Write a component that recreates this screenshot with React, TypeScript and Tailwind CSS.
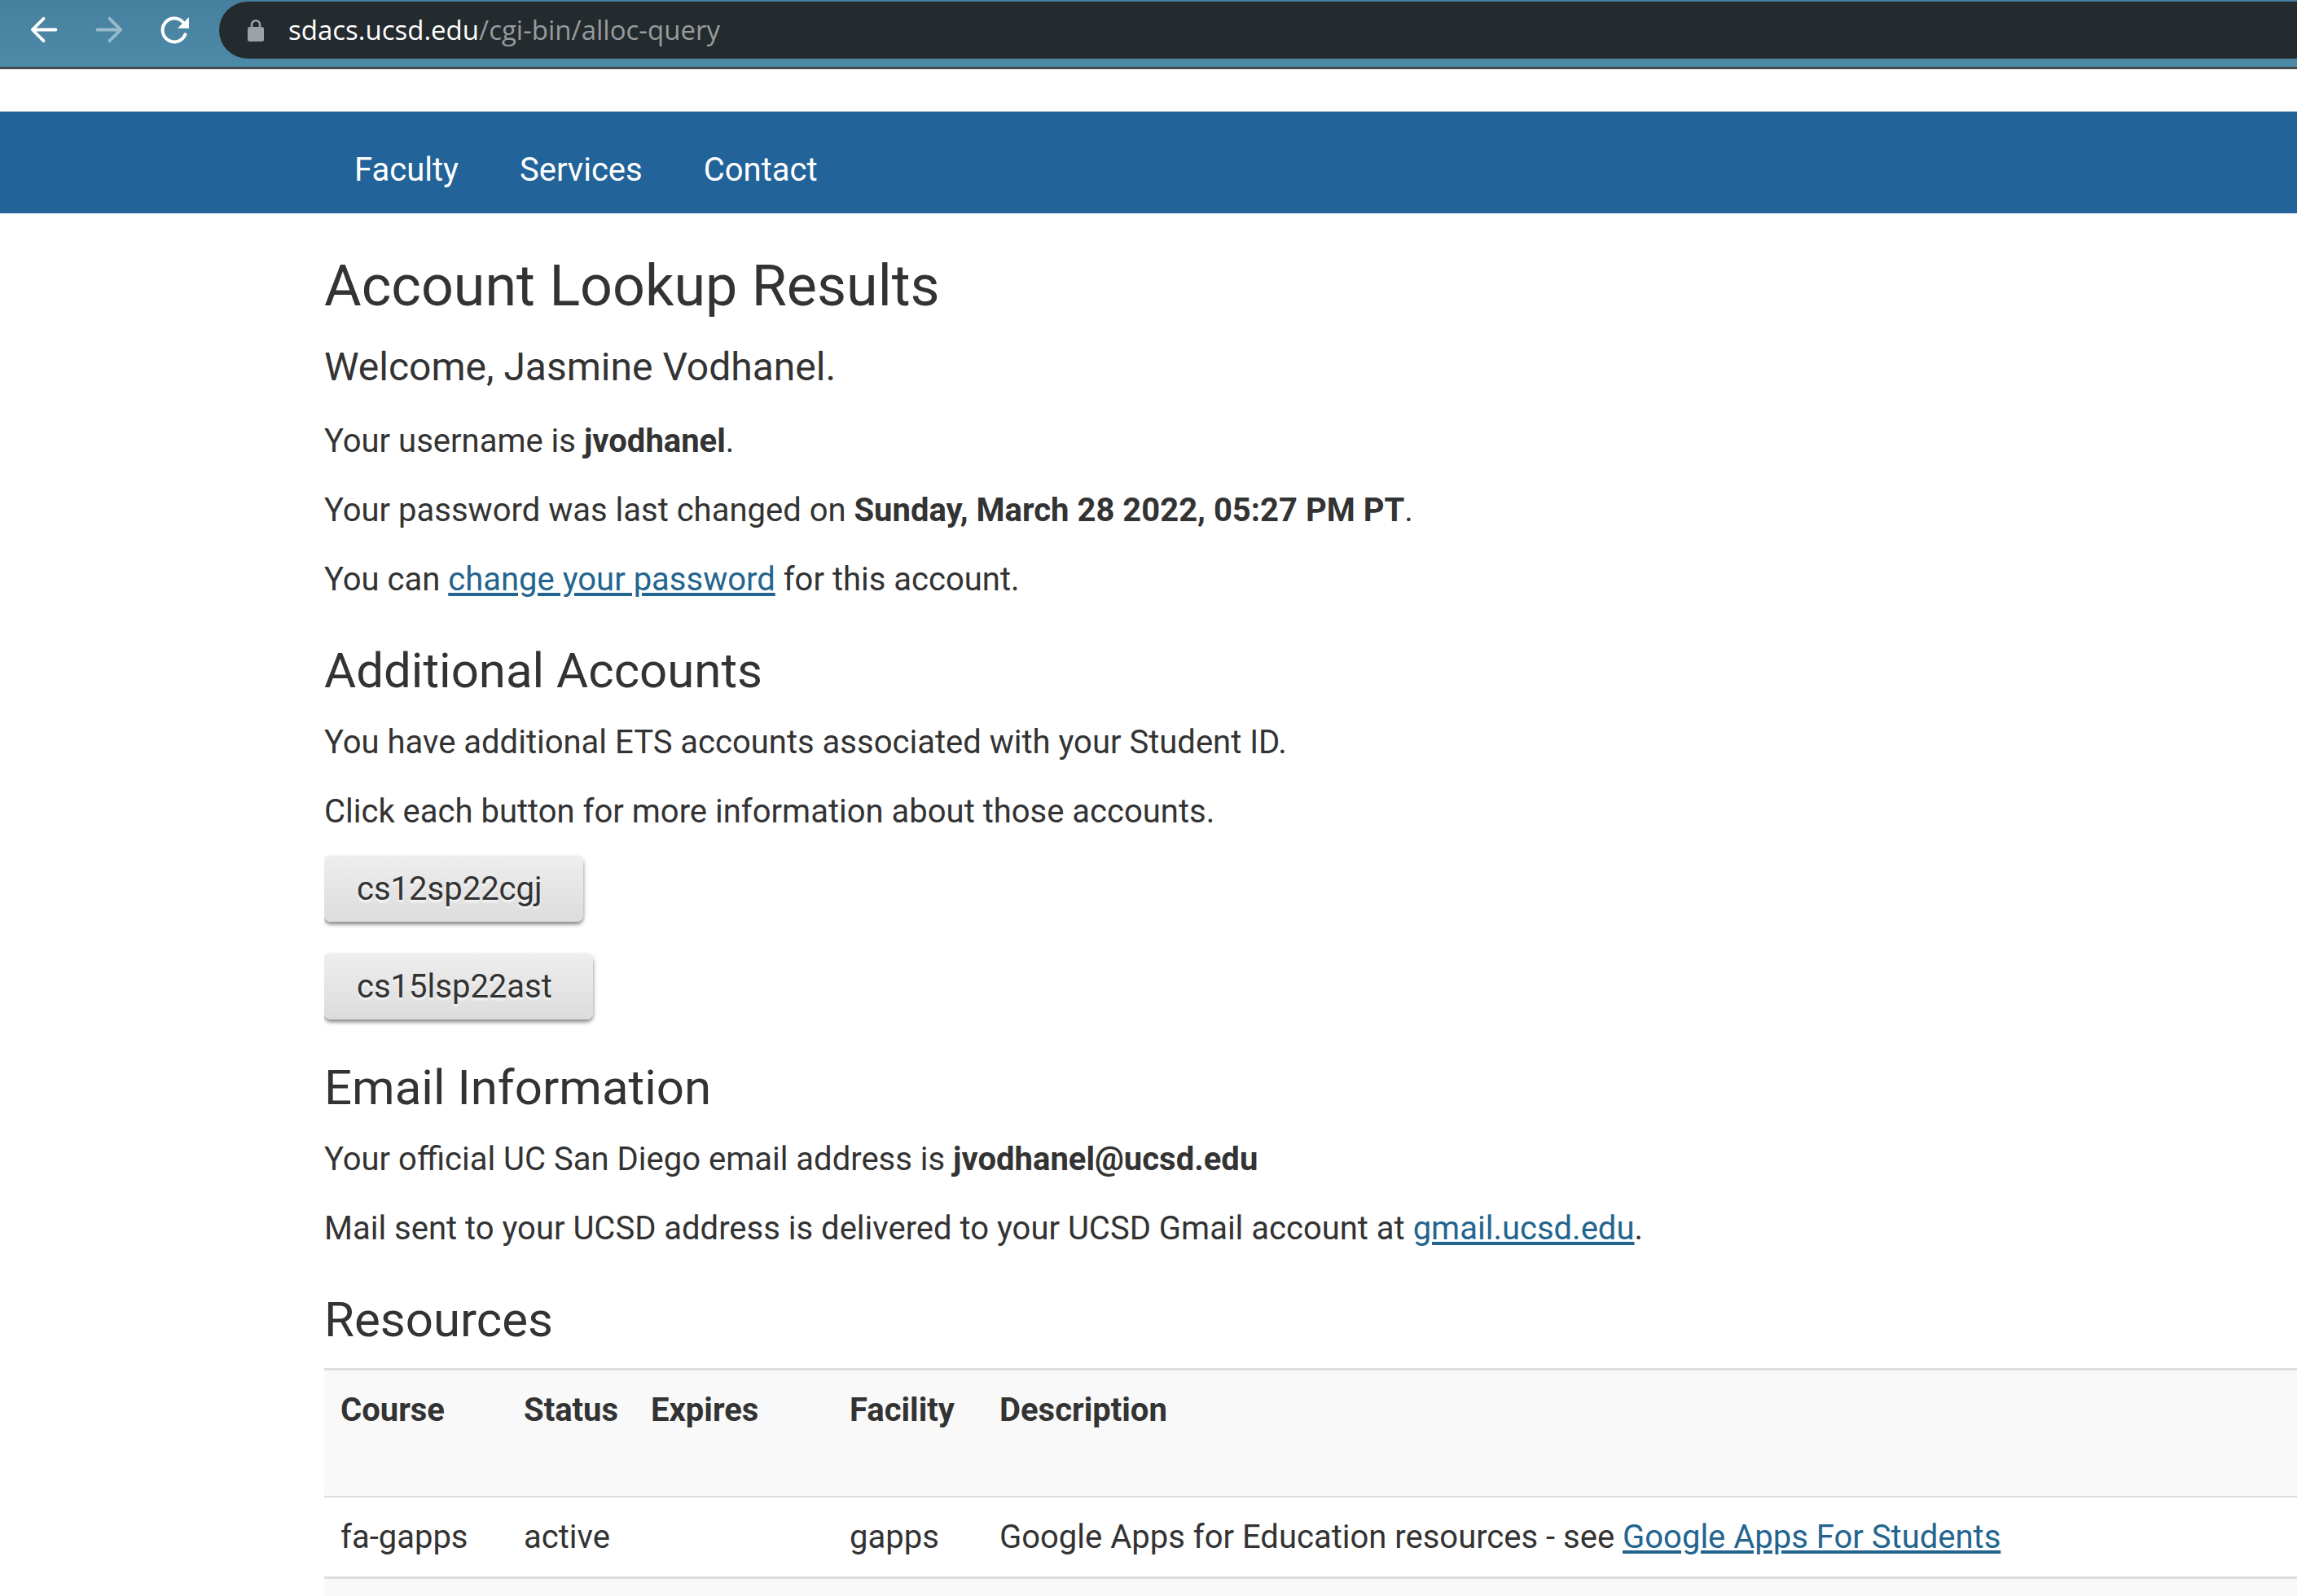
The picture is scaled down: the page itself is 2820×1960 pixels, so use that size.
import type { ReactNode } from "react";

const navLinks = ["Faculty", "Services", "Contact"];
const accounts = ["cs12sp22cgj", "cs15lsp22ast"];

function BackIcon() {
  return (
    <svg width="36" height="36" viewBox="0 0 36 36" fill="none" stroke="currentColor" strokeWidth="3.8" strokeLinecap="round" strokeLinejoin="round" aria-hidden="true">
      <path d="M32.5 17.5H4M17.5 3.8L3.8 17.5L17.5 31.2" />
    </svg>
  );
}

function ForwardIcon() {
  return (
    <svg width="36" height="36" viewBox="0 0 36 36" fill="none" stroke="currentColor" strokeWidth="3.8" strokeLinecap="round" strokeLinejoin="round" aria-hidden="true">
      <path d="M3.5 17.5H32M18.5 3.8L32.2 17.5L18.5 31.2" />
    </svg>
  );
}

function ReloadIcon() {
  return (
    <svg width="36" height="36" viewBox="0 0 36 36" fill="none" aria-hidden="true">
      <path d="M31.4 23.3A14.4 14.4 0 1 1 28.2 7.8" stroke="currentColor" strokeWidth="4" strokeLinecap="round" />
      <path d="M36 2V15.8H22Z" fill="currentColor" />
    </svg>
  );
}

function LockIcon() {
  return (
    <svg width="20" height="28" viewBox="0 0 20 28" fill="none" aria-hidden="true">
      <rect x="0" y="10" width="20" height="18" rx="2.5" fill="#9ea1a8" />
      <path d="M5 11V7.3a5 5 0 0 1 10 0V11" stroke="#9ea1a8" strokeWidth="2.6" />
    </svg>
  );
}

function PageLink({ children }: { children: ReactNode }) {
  return (
    <a href="#" className="text-[#24658f] underline decoration-[4px] underline-offset-[3px]">
      {children}
    </a>
  );
}

function SectionTitle({ children }: { children: ReactNode }) {
  return <h2 className="mt-[51px] mb-[26px] text-[60px] leading-[66px]">{children}</h2>;
}

export default function App() {
  return (
    <div className="h-screen overflow-hidden bg-white font-[Roboto,sans-serif] text-[40px] leading-[57px] text-[#333]">
      <header className="flex h-[85px] items-start border-b-[3px] border-[#474b50] bg-linear-to-b from-[#47809f] to-[#4d8aa7] pt-[2px]">
        <div className="flex h-[70px] items-center gap-[44px] pl-[36px] text-white">
          <button type="button" aria-label="Back"><BackIcon /></button>
          <button type="button" aria-label="Forward" className="text-[#98bbcb]"><ForwardIcon /></button>
          <button type="button" aria-label="Reload"><ReloadIcon /></button>
        </div>
        <div className="ml-[37px] flex h-[70px] flex-1 items-center gap-[30px] rounded-l-full bg-[#242b2e] pl-[35px]">
          <LockIcon />
          <div className="font-['Open_Sans',sans-serif] text-[33px] leading-[48px] text-[#989a9c]">
            <span className="text-white">sdacs.ucsd.edu</span>/cgi-bin/alloc-query
          </div>
        </div>
      </header>

      <nav className="mt-[52px] flex gap-[75px] bg-[#226399] pt-[43px] pb-[25px] pl-[435px] text-white">
        {navLinks.map((label) => (
          <a key={label} href="#">{label}</a>
        ))}
      </nav>

      <main className="pl-[398px]">
        <h1 className="mt-[49px] text-[70px] leading-[80px]">Account Lookup Results</h1>
        <p className="mt-[26px] text-[48px] leading-[68px]">Welcome, Jasmine Vodhanel.</p>
        <div className="mt-[28px] flex flex-col gap-[28px]">
          <p>Your username is <strong>jvodhanel</strong>.</p>
          <p>Your password was last changed on <strong>Sunday, March 28 2022, 05:27 PM PT</strong>.</p>
          <p>You can <PageLink>change your password</PageLink> for this account.</p>
        </div>

        <SectionTitle>Additional Accounts</SectionTitle>
        <div className="flex flex-col gap-[28px]">
          <p>You have additional ETS accounts associated with your Student ID.</p>
          <p>Click each button for more information about those accounts.</p>
        </div>
        <div className="mt-[26px] flex flex-col items-start gap-[39px] overflow-x-clip">
          {accounts.map((name) => (
            <button
              key={name}
              type="button"
              className="rounded-[8px] bg-linear-to-b from-[#eee] to-[#dcdcdc] py-[12px] pr-[50px] pl-[40px] shadow-[0_3px_5px_rgba(0,0,0,0.5)] text-shadow-[0_3px_3px_rgb(255_255_255/0.75)]"
            >
              {name}
            </button>
          ))}
        </div>

        <SectionTitle>Email Information</SectionTitle>
        <div className="flex flex-col gap-[28px]">
          <p>Your official UC San Diego email address is <strong>jvodhanel@ucsd.edu</strong></p>
          <p>Mail sent to your UCSD address is delivered to your UCSD Gmail account at <PageLink>gmail.ucsd.edu</PageLink>.</p>
        </div>

        <SectionTitle>Resources</SectionTitle>
        <table className="w-full table-fixed border-collapse text-left">
          <colgroup>
            <col className="w-[225px]" />
            <col className="w-[156px]" />
            <col className="w-[244px]" />
            <col className="w-[184px]" />
            <col />
          </colgroup>
          <thead>
            <tr className="border-t-[3px] border-[#ddd] bg-[#f9f9f9]">
              {["Course", "Status", "Expires", "Facility", "Description"].map((title) => (
                <th key={title} scope="col" className="px-[20px] pt-[20px] pb-[77px] font-bold">{title}</th>
              ))}
            </tr>
          </thead>
          <tbody>
            <tr className="border-t-[2px] border-[#ddd]">
              <td className="p-[20px]">fa-gapps</td>
              <td className="p-[20px]">active</td>
              <td className="p-[20px]" />
              <td className="p-[20px]">gapps</td>
              <td className="p-[20px]">Google Apps for Education resources - see <PageLink>Google Apps For Students</PageLink></td>
            </tr>
            <tr className="h-[97px] border-t-[3px] border-[#ddd] bg-[#f9f9f9]">
              <td colSpan={5} />
            </tr>
          </tbody>
        </table>
      </main>
    </div>
  );
}
